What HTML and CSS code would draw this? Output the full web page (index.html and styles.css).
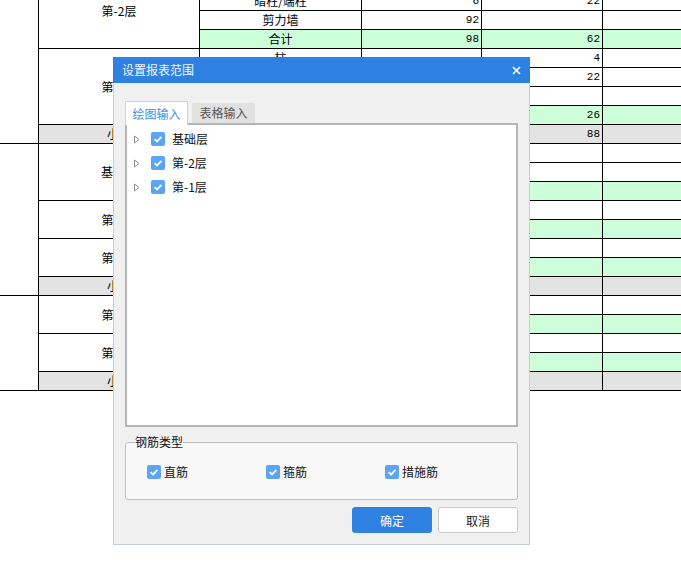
FILE: index.html
```html
<!DOCTYPE html>
<html lang="zh">
<head>
<meta charset="utf-8">
<title>设置报表范围</title>
<link rel="stylesheet" href="styles.css">
</head>
<body>
<div class="sheet">
  <!-- r0 -->
  <div class="c c0 s9"></div>
  <div class="c c1 s4">第-2层</div>
  <div class="c t">梁</div><div class="c n">4</div><div class="c n">12</div><div class="c"></div>
  <!-- r1 -->
  <div class="c t">暗柱/端柱</div><div class="c n">6</div><div class="c n">22</div><div class="c"></div>
  <!-- r2 -->
  <div class="c t">剪力墙</div><div class="c n">92</div><div class="c n"></div><div class="c"></div>
  <!-- r3 -->
  <div class="c t g">合计</div><div class="c n g">98</div><div class="c n g">62</div><div class="c g"></div>
  <!-- r4 -->
  <div class="c c1 s4">第-1层</div>
  <div class="c t">柱</div><div class="c n"></div><div class="c n">4</div><div class="c"></div>
  <!-- r5 -->
  <div class="c t">暗柱/端柱</div><div class="c n"></div><div class="c n">22</div><div class="c"></div>
  <!-- r6 -->
  <div class="c t">剪力墙</div><div class="c n"></div><div class="c n"></div><div class="c"></div>
  <!-- r7 -->
  <div class="c t g">合计</div><div class="c n g"></div><div class="c n g">26</div><div class="c g"></div>
  <!-- r8 -->
  <div class="c c1 k">小计</div><div class="c k"></div><div class="c n k"></div><div class="c n k">88</div><div class="c k"></div>
  <!-- r9 -->
  <div class="c c0 s8"></div>
  <div class="c c1 s3">基础层</div>
  <div class="c t">柱</div><div class="c n"></div><div class="c n"></div><div class="c"></div>
  <!-- r10 -->
  <div class="c t">剪力墙</div><div class="c n"></div><div class="c n"></div><div class="c"></div>
  <!-- r11 -->
  <div class="c t g">合计</div><div class="c n g"></div><div class="c n g"></div><div class="c g"></div>
  <!-- r12 -->
  <div class="c c1 s2">第-2层</div>
  <div class="c t">柱</div><div class="c n"></div><div class="c n"></div><div class="c"></div>
  <!-- r13 -->
  <div class="c t g">合计</div><div class="c n g"></div><div class="c n g"></div><div class="c g"></div>
  <!-- r14 -->
  <div class="c c1 s2">第-1层</div>
  <div class="c t">柱</div><div class="c n"></div><div class="c n"></div><div class="c"></div>
  <!-- r15 -->
  <div class="c t g">合计</div><div class="c n g"></div><div class="c n g"></div><div class="c g"></div>
  <!-- r16 -->
  <div class="c c1 k">小计</div><div class="c k"></div><div class="c n k"></div><div class="c n k"></div><div class="c k"></div>
  <!-- r17 -->
  <div class="c c0 s5"></div>
  <div class="c c1 s2">第-2层</div>
  <div class="c t">柱</div><div class="c n"></div><div class="c n"></div><div class="c"></div>
  <!-- r18 -->
  <div class="c t g">合计</div><div class="c n g"></div><div class="c n g"></div><div class="c g"></div>
  <!-- r19 -->
  <div class="c c1 s2">第-1层</div>
  <div class="c t">柱</div><div class="c n"></div><div class="c n"></div><div class="c"></div>
  <!-- r20 -->
  <div class="c t g">合计</div><div class="c n g"></div><div class="c n g"></div><div class="c g"></div>
  <!-- r21 -->
  <div class="c c1 k">小计</div><div class="c k"></div><div class="c n k"></div><div class="c n k"></div><div class="c k"></div>
</div>

<div class="dialog">
  <div class="titlebar">
    <span class="title">设置报表范围</span>
    <svg class="close" width="9" height="9" viewBox="0 0 9 9"><path d="M1 1 L8 8 M8 1 L1 8" stroke="#fff" stroke-width="1.6" fill="none"/></svg>
  </div>
  <div class="body">
    <div class="tabs">
      <div class="tab active">绘图输入</div>
      <div class="tab">表格输入</div>
    </div>
    <div class="panel">
      <div class="node">
        <svg class="arrow" width="6" height="9" viewBox="0 0 6 9"><path d="M0.5 1 L5 4.5 L0.5 8 Z" stroke="#8c8c8c" stroke-width="1" fill="none"/></svg>
        <svg class="cb" width="14" height="14" viewBox="0 0 14 14"><rect width="14" height="14" rx="2" fill="#5ca4f4"/><path d="M3.6 7.2 L6 9.5 L10.4 4.9" stroke="#fff" stroke-width="1.8" fill="none"/></svg>
        <span class="label">基础层</span>
      </div>
      <div class="node">
        <svg class="arrow" width="6" height="9" viewBox="0 0 6 9"><path d="M0.5 1 L5 4.5 L0.5 8 Z" stroke="#8c8c8c" stroke-width="1" fill="none"/></svg>
        <svg class="cb" width="14" height="14" viewBox="0 0 14 14"><rect width="14" height="14" rx="2" fill="#5ca4f4"/><path d="M3.6 7.2 L6 9.5 L10.4 4.9" stroke="#fff" stroke-width="1.8" fill="none"/></svg>
        <span class="label">第-2层</span>
      </div>
      <div class="node">
        <svg class="arrow" width="6" height="9" viewBox="0 0 6 9"><path d="M0.5 1 L5 4.5 L0.5 8 Z" stroke="#8c8c8c" stroke-width="1" fill="none"/></svg>
        <svg class="cb" width="14" height="14" viewBox="0 0 14 14"><rect width="14" height="14" rx="2" fill="#5ca4f4"/><path d="M3.6 7.2 L6 9.5 L10.4 4.9" stroke="#fff" stroke-width="1.8" fill="none"/></svg>
        <span class="label">第-1层</span>
      </div>
    </div>
    <fieldset class="group">
      <legend class="legend">钢筋类型</legend>
      <div class="opts">
        <div class="opt">
          <svg class="cb" width="14" height="14" viewBox="0 0 14 14"><rect width="14" height="14" rx="2" fill="#5ca4f4"/><path d="M3.6 7.2 L6 9.5 L10.4 4.9" stroke="#fff" stroke-width="1.8" fill="none"/></svg>
          <span class="label">直筋</span>
        </div>
        <div class="opt">
          <svg class="cb" width="14" height="14" viewBox="0 0 14 14"><rect width="14" height="14" rx="2" fill="#5ca4f4"/><path d="M3.6 7.2 L6 9.5 L10.4 4.9" stroke="#fff" stroke-width="1.8" fill="none"/></svg>
          <span class="label">箍筋</span>
        </div>
        <div class="opt">
          <svg class="cb" width="14" height="14" viewBox="0 0 14 14"><rect width="14" height="14" rx="2" fill="#5ca4f4"/><path d="M3.6 7.2 L6 9.5 L10.4 4.9" stroke="#fff" stroke-width="1.8" fill="none"/></svg>
          <span class="label">措施筋</span>
        </div>
      </div>
    </fieldset>
    <div class="buttons">
      <button class="btn primary">确定</button>
      <button class="btn">取消</button>
    </div>
  </div>
</div>
</body>
</html>
```
FILE: styles.css
```css
html, body {
  margin: 0;
  padding: 0;
  background: #fff;
  overflow: hidden;
  font-family: "Noto Sans CJK SC", "Liberation Sans", sans-serif;
  font-size: 12px;
  color: #000;
}

body {
  width: 681px;
  height: 573px;
  position: relative;
}

/* background spreadsheet */
.sheet {
  display: grid;
  grid-template-columns: 38px 160px 161px 119px 120px 1fr;
  grid-auto-rows: 18px;
  gap: 1px;
  background: #000;
  padding-bottom: 1px;
  margin-top: -27px;
}

.c {
  background: #fff;
  line-height: 18px;
  white-space: nowrap;
  overflow: hidden;
}

.c0 { grid-column: 1; }
.c1 {
  grid-column: 2;
  display: flex;
  align-items: center;
  justify-content: center;
}
.s2 { grid-row: span 2; }
.s3 { grid-row: span 3; }
.s4 { grid-row: span 4; }
.s5 { grid-row: span 5; }
.s8 { grid-row: span 8; }
.s9 { grid-row: span 9; }

.t { text-align: center; }
.n {
  text-align: right;
  padding-right: 2px;
  font-family: "Liberation Mono", "DejaVu Sans Mono", monospace;
  font-size: 11px;
}
.g { background: #ccfed9; }
.k { background: #e3e3e3; }

/* dialog */
.dialog {
  position: absolute;
  left: 113px;
  top: 57px;
  width: 417px;
  box-sizing: border-box;
  border: 1px solid #c6ccd5;
  border-top: 0;
  background: #f0f0f0;
}

.titlebar {
  height: 26px;
  margin: 0 -1px;
  background: #2e80e1;
  display: flex;
  align-items: center;
  justify-content: space-between;
  padding: 0 9px 0 9px;
}

.title {
  color: #f2f6fc;
  font-size: 12px;
  line-height: 16px;
}

.close { display: block; }

.body {
  padding: 16px 11px 11px 11px;
}

.tabs {
  display: flex;
  align-items: flex-end;
  gap: 4px;
  height: 24px;
}

.tab {
  width: 63px;
  height: 20px;
  box-sizing: border-box;
  background: #e1e1e1;
  color: #555;
  text-align: center;
  line-height: 20px;
  border-radius: 2px 2px 0 0;
}

.tab.active {
  height: 24px;
  line-height: 24px;
  background: #fff;
  color: #3d8fe6;
  border: 1px solid #cfcfcf;
  border-bottom: 0;
  margin-bottom: -2px;
  position: relative;
  z-index: 1;
}

.panel {
  height: 304px;
  box-sizing: border-box;
  border: 2px solid #b6b6b6;
  background: #fff;
  padding: 2px 0 0 7px;
}

.node {
  height: 24px;
  display: flex;
  align-items: center;
}

.arrow {
  display: block;
  margin-right: 11px;
}

.cb { display: block; flex: none; }

.label {
  line-height: 16px;
  color: #111;
}

.node .label { margin-left: 7px; }

.group {
  margin: 8px 0 0 0;
  padding: 15px 0 21px 0;
  border: 1px solid #bfbfbf;
  border-radius: 3px;
  background: #f8f8f8;
  min-width: 0;
}

.legend {
  padding: 0;
  margin-left: 9px;
  line-height: 14px;
  font-size: 12px;
  color: #111;
}

.opts {
  display: grid;
  grid-template-columns: 119px 119px 119px;
  height: 14px;
  padding-left: 21px;
}

.opt {
  display: flex;
  align-items: center;
  gap: 3px;
}

.buttons {
  display: flex;
  justify-content: flex-end;
  gap: 6px;
  margin-top: 7px;
}

.btn {
  width: 80px;
  height: 26px;
  box-sizing: border-box;
  border: 1px solid #cbcbcb;
  border-radius: 3px;
  background: #fff;
  color: #222;
  font-family: "Noto Sans CJK SC", "Liberation Sans", sans-serif;
  font-size: 12px;
  padding: 0;
}

.btn.primary {
  background: #2e80e1;
  border-color: #2e80e1;
  color: #fff;
}
```
